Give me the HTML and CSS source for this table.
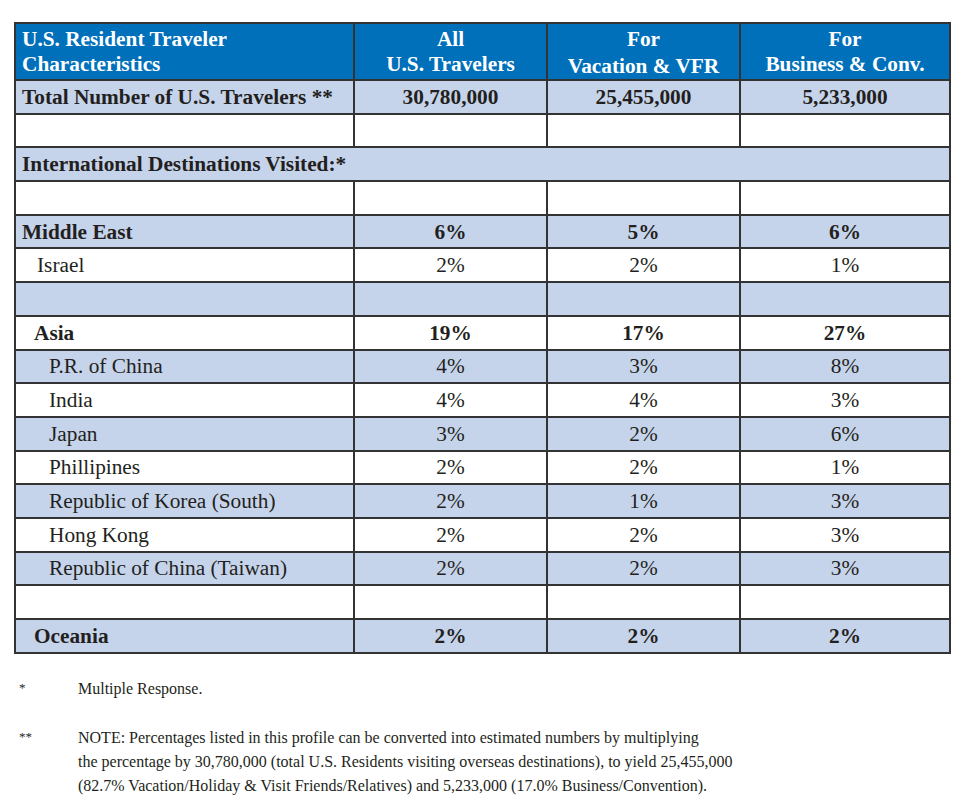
FILE: index.html
```html
<!DOCTYPE html>
<html>
<head>
<meta charset="utf-8">
<link rel="stylesheet" href="styles.css">
</head>
<body>
<table class="profile">
  <colgroup>
    <col class="c-label"><col class="c-num"><col class="c-num"><col class="c-last">
  </colgroup>
  <thead>
    <tr class="head">
      <th class="lbl">U.S. Resident Traveler<br>Characteristics</th>
      <th>All<br>U.S. Travelers</th>
      <th class="low">For<br>Vacation &amp; VFR</th>
      <th>For<br>Business &amp; Conv.</th>
    </tr>
  </thead>
  <tbody>
    <tr class="shade bold"><td>Total Number of U.S. Travelers **</td><td>30,780,000</td><td>25,455,000</td><td>5,233,000</td></tr>
    <tr><td></td><td></td><td></td><td></td></tr>
    <tr class="shade bold"><td colspan="4">International Destinations Visited:*</td></tr>
    <tr><td></td><td></td><td></td><td></td></tr>
    <tr class="shade bold"><td>Middle East</td><td>6%</td><td>5%</td><td>6%</td></tr>
    <tr><td class="i1">Israel</td><td>2%</td><td>2%</td><td>1%</td></tr>
    <tr class="shade"><td></td><td></td><td></td><td></td></tr>
    <tr class="bold"><td class="i1b">Asia</td><td>19%</td><td>17%</td><td>27%</td></tr>
    <tr class="shade"><td class="i2">P.R. of China</td><td>4%</td><td>3%</td><td>8%</td></tr>
    <tr><td class="i2">India</td><td>4%</td><td>4%</td><td>3%</td></tr>
    <tr class="shade"><td class="i2">Japan</td><td>3%</td><td>2%</td><td>6%</td></tr>
    <tr><td class="i2">Phillipines</td><td>2%</td><td>2%</td><td>1%</td></tr>
    <tr class="shade"><td class="i2">Republic of Korea (South)</td><td>2%</td><td>1%</td><td>3%</td></tr>
    <tr><td class="i2">Hong Kong</td><td>2%</td><td>2%</td><td>3%</td></tr>
    <tr class="shade"><td class="i2">Republic of China (Taiwan)</td><td>2%</td><td>2%</td><td>3%</td></tr>
    <tr><td></td><td></td><td></td><td></td></tr>
    <tr class="shade bold"><td class="i1b">Oceania</td><td>2%</td><td>2%</td><td>2%</td></tr>
  </tbody>
</table>

<div class="notes">
  <div class="note">
    <span class="mark">*</span>
    <p>Multiple Response.</p>
  </div>
  <div class="note">
    <span class="mark">**</span>
    <p>NOTE: Percentages listed in this profile can be converted into estimated numbers by multiplying<br>the percentage by 30,780,000 (total U.S. Residents visiting overseas destinations), to yield 25,455,000<br>(82.7% Vacation/Holiday &amp; Visit Friends/Relatives) and 5,233,000 (17.0% Business/Convention).</p>
  </div>
</div>
</body>
</html>
```
FILE: styles.css
```css
html, body {
  margin: 0;
  padding: 0;
  background: #ffffff;
}
body {
  font-family: "Liberation Serif", "Times New Roman", serif;
  color: #231f20;
}
.profile {
  border-collapse: collapse;
  width: 935px;
  margin: 22px 0 0 14px;
  table-layout: fixed;
  border: 2px solid #3a3a3a;
}
.c-label { width: 339px; }
.c-num { width: 193px; }
.c-last { width: 210px; }

.profile th, .profile td {
  font-family: "Liberation Serif", "Times New Roman", serif;
  border: 2px solid #333333;
  padding: 0 6px;
  font-size: 21.3px;
  height: 31.7px;
  text-align: center;
  vertical-align: middle;
  line-height: 24px;
}
.profile td:first-child { text-align: left; }
.head th {
  background: #0070ba;
  color: #ffffff;
  font-weight: bold;
  height: 53px;
  padding: 1px 6px 0;
  line-height: 25px;
}
.head th.lbl { text-align: left; }
.head th.low { line-height: 26.5px; padding-top: 2px; }
.shade td { background: #c6d4eb; }
.bold td { font-weight: bold; }
.profile td.i1 { padding-left: 21px; }
.profile td.i1b { padding-left: 18px; }
.profile td.i2 { padding-left: 33px; }

.notes {
  margin: 23px 0 0 0;
  font-family: "Liberation Serif", "Times New Roman", serif;
  font-size: 16px;
  color: #231f20;
}
.note {
  display: flex;
  margin-bottom: 25px;
}
.note .mark {
  width: 78px;
  padding-left: 19px;
  box-sizing: border-box;
  font-size: 13px;
  line-height: 22px;
  flex: none;
}
.note p {
  margin: 0;
  line-height: 24px;
}
```
